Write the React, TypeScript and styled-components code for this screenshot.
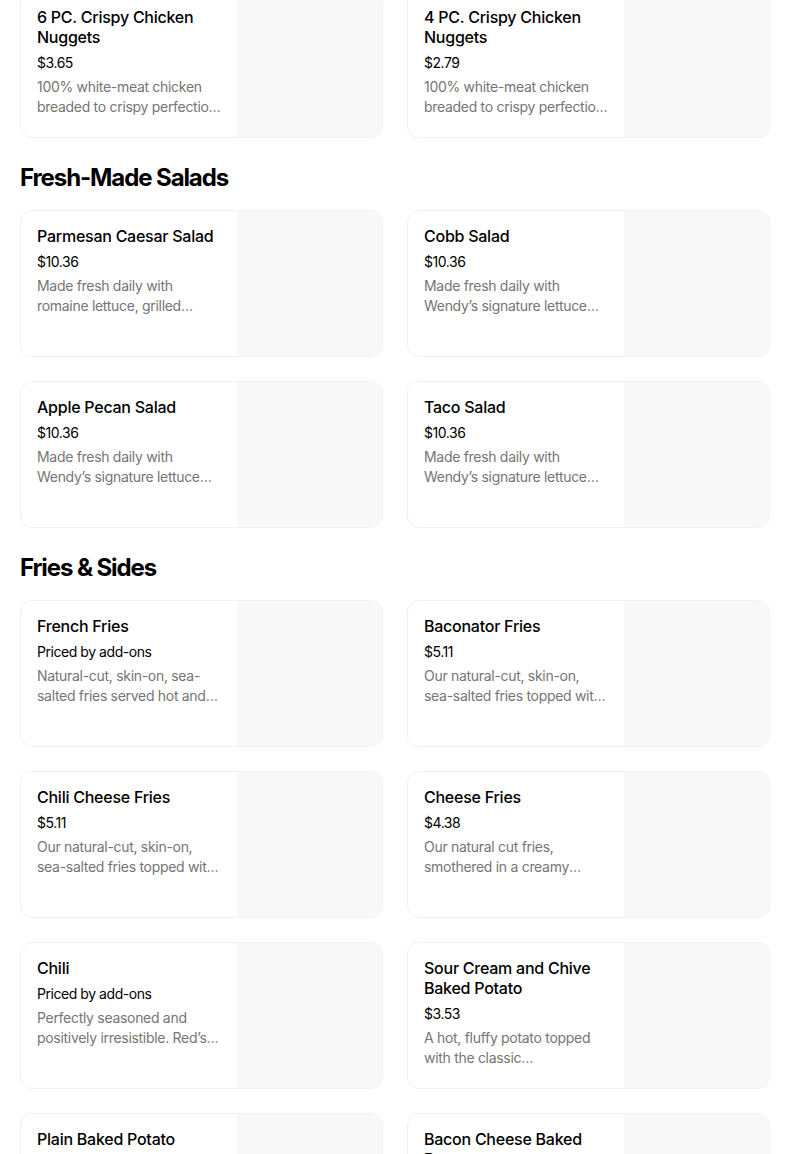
import React from "react";
import styled, { createGlobalStyle } from "styled-components";

const Global = createGlobalStyle`
  html, body { margin: 0; padding: 0; background: #ffffff; }
  body { font-family: Inter, "Noto Sans", Arial, sans-serif; color: #000; overflow: hidden; }
  * { box-sizing: border-box; }
`;

const Page = styled.main`
  padding: 0 34px 0 20px;
  margin-top: -9px;
  display: flex;
  flex-direction: column;
`;

const Heading = styled.h2`
  margin: 24px 0 16px;
  font-size: 24px;
  line-height: 32px;
  font-weight: 700;
  letter-spacing: -1.1px;
`;

const Grid = styled.div`
  display: grid;
  grid-template-columns: 1fr 1fr;
  gap: 24px;
`;

const Card = styled.div`
  display: flex;
  border: 1px solid #f1f1f1;
  border-radius: 12px;
  overflow: hidden;
  height: 147px;
  background: #fff;
`;

const Info = styled.div`
  flex: 1;
  min-width: 0;
  padding: 15px 16px 16px;
  display: flex;
  flex-direction: column;
`;

const Title = styled.div`
  font-size: 16px;
  line-height: 20px;
  font-weight: 500;
  color: #000;
  letter-spacing: -0.25px;
`;

const Price = styled.div`
  margin-top: 6px;
  font-size: 14px;
  line-height: 20px;
  color: #000;
  letter-spacing: -0.45px;
`;

const Desc = styled.div`
  margin-top: 4px;
  font-size: 14px;
  line-height: 20px;
  color: #757575;
  letter-spacing: -0.3px;
  display: -webkit-box;
  -webkit-line-clamp: 2;
  -webkit-box-orient: vertical;
  overflow: hidden;
`;

const Thumb = styled.div`
  width: 145px;
  flex: none;
  background: #f8f8f8;
`;

type Item = { title: string; price: string; desc: string };

const Product = ({ title, price, desc }: Item) => (
  <Card>
    <Info>
      <Title>{title}</Title>
      <Price>{price}</Price>
      <Desc>{desc}</Desc>
    </Info>
    <Thumb />
  </Card>
);

const nuggets: Item[] = [
  { title: "6 PC. Crispy Chicken Nuggets", price: "$3.65", desc: "100% white-meat chicken breaded to crispy perfection and served with your choice of dipping sauce." },
  { title: "4 PC. Crispy Chicken Nuggets", price: "$2.79", desc: "100% white-meat chicken breaded to crispy perfection and served with your choice of dipping sauce." },
];

const salads: Item[] = [
  { title: "Parmesan Caesar Salad", price: "$10.36", desc: "Made fresh daily with romaine lettuce, grilled chicken, shaved parmesan cheese." },
  { title: "Cobb Salad", price: "$10.36", desc: "Made fresh daily with Wendy’s signature lettuce blend, grilled chicken and bacon." },
  { title: "Apple Pecan Salad", price: "$10.36", desc: "Made fresh daily with Wendy’s signature lettuce blend, red apples and pecans." },
  { title: "Taco Salad", price: "$10.36", desc: "Made fresh daily with Wendy’s signature lettuce blend, chili and cheese." },
];

const sides: Item[] = [
  { title: "French Fries", price: "Priced by add-ons", desc: "Natural-cut, skin-on, sea-salted fries served hot and crispy." },
  { title: "Baconator Fries", price: "$5.11", desc: "Our natural-cut, skin-on, sea-salted fries topped with cheese sauce and bacon." },
  { title: "Chili Cheese Fries", price: "$5.11", desc: "Our natural-cut, skin-on, sea-salted fries topped with chili and cheese." },
  { title: "Cheese Fries", price: "$4.38", desc: "Our natural cut fries, smothered in a creamy cheese sauce." },
  { title: "Chili", price: "Priced by add-ons", desc: "Perfectly seasoned and positively irresistible. Red’s famous chili recipe." },
  { title: "Sour Cream and Chive Baked Potato", price: "$3.53", desc: "A hot, fluffy potato topped with the classic accompaniments: sour cream and chives." },
  { title: "Plain Baked Potato", price: "$2.49", desc: "A hot, fluffy baked potato." },
  { title: "Bacon Cheese Baked Potato", price: "$4.19", desc: "A hot, fluffy potato topped with cheese sauce and bacon." },
];

export default function App() {
  return (
    <>
      <Global />
      <Page>
        <Grid>
          {nuggets.map((i) => <Product key={i.title} {...i} />)}
        </Grid>
        <Heading>Fresh-Made Salads</Heading>
        <Grid>
          {salads.map((i) => <Product key={i.title} {...i} />)}
        </Grid>
        <Heading>Fries &amp; Sides</Heading>
        <Grid>
          {sides.map((i) => <Product key={i.title} {...i} />)}
        </Grid>
      </Page>
    </>
  );
}
